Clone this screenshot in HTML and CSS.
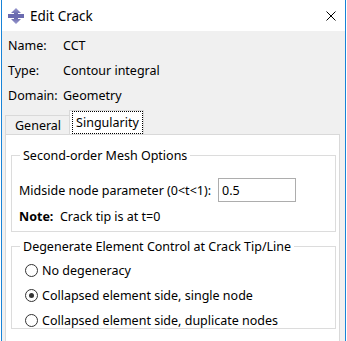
FILE: index.html
```html
<!DOCTYPE html>
<html>
  <head>
    <title>Edit Crack</title>
    <meta charset="utf-8" />
    <link rel="stylesheet" href="styles.css">
  </head>
  <body>
    <div class="window">
      <div class="titlebar">
        <svg class="app-icon" width="16" height="16" viewBox="0 0 16 16">
          <defs>
            <linearGradient id="iconFill" x1="0" y1="0" x2="0" y2="1">
              <stop offset="0" stop-color="#9a9ad0" />
              <stop offset="0.5" stop-color="#5a5aa0" />
              <stop offset="1" stop-color="#9a9ad0" />
            </linearGradient>
          </defs>
          <polygon points="8,0 13,5 10,5 10,11 13,11 8,16 3,11 6,11 6,5 3,5" fill="url(#iconFill)" />
          <rect x="0" y="6" width="16" height="4" fill="#6b6bb0" />
        </svg>
        <span class="title">Edit Crack</span>
        <svg class="close" width="10" height="10" viewBox="0 0 10 10">
          <path d="M0.5 0.5 L9.5 9.5 M9.5 0.5 L0.5 9.5" stroke="#000" stroke-width="1" />
        </svg>
      </div>
      <div class="content">
        <div class="info">
          <div class="info-row"><span class="info-label">Name:</span><span>CCT</span></div>
          <div class="info-row"><span class="info-label">Type:</span><span>Contour integral</span></div>
          <div class="info-row"><span class="info-label">Domain:</span><span>Geometry</span></div>
        </div>
        <div class="tabs">
          <div class="tab">General</div>
          <div class="tab tab-active"><span class="tab-focus">Singularity</span></div>
        </div>
        <div class="panel">
          <fieldset class="group group-mesh">
            <legend>Second-order Mesh Options</legend>
            <div class="param-row">
              <label for="midside">Midside node parameter (0&lt;t&lt;1):</label>
              <input id="midside" class="text-input" type="text" value="0.5" />
            </div>
            <div class="note"><b>Note:</b>&nbsp; Crack tip is at t=0</div>
          </fieldset>
          <fieldset class="group group-degen">
            <legend>Degenerate Element Control at Crack Tip/Line</legend>
            <div class="radio-row"><span class="radio"></span>No degeneracy</div>
            <div class="radio-row"><span class="radio checked"></span>Collapsed element side, single node</div>
            <div class="radio-row"><span class="radio"></span>Collapsed element side, duplicate nodes</div>
          </fieldset>
        </div>
      </div>
    </div>
  </body>
</html>
```
FILE: styles.css
```css
body {
  margin: 0;
  padding: 0;
  background: #fff;
  font-family: "Noto Sans", "Open Sans", sans-serif;
  font-size: 12.5px;
  color: #000;
  overflow: hidden;
}

.window {
  margin-left: 1px;
  width: 345px;
  height: 341px;
  box-sizing: border-box;
  border-left: 1px solid #1883d7;
  border-right: 1px solid #1883d7;
  background: #f0f0f0;
  overflow: hidden;
}

/* Title bar */

.titlebar {
  height: 31px;
  background: #fff;
  display: flex;
  align-items: center;
  padding: 0 8px 0 6px;
}

.app-icon {
  margin-right: 6px;
}

.title {
  flex: 1;
  font-size: 13.5px;
}

.close {
  margin-right: 1px;
}

/* Info rows */

.content {
  padding-top: 2px;
}

.info {
  padding-left: 6px;
}

.info-row {
  height: 25px;
  display: flex;
  align-items: center;
}

.info-label {
  width: 55px;
}

/* Tabs */

.tabs {
  display: flex;
  align-items: flex-end;
  margin: 2px 0 0 3px;
  height: 24px;
}

.tab {
  height: 19px;
  box-sizing: border-box;
  padding: 0 8px 0 9px;
  border: 1px solid #d9d9d9;
  border-bottom: none;
  display: flex;
  align-items: center;
  background: #f0f0f0;
}

.tab-active {
  height: 24px;
  margin-left: -1px;
  padding: 0 1px 0 3px;
  background: #fff;
  align-items: flex-start;
  padding-top: 1px;
}

.tab-focus {
  outline: 1px dotted #000;
  padding: 0 3px;
  height: 21px;
  display: flex;
  align-items: center;
}

/* Panel */

.panel {
  margin-left: 3px;
  width: 335px;
  height: 240px;
  box-sizing: border-box;
  border: 1px solid #d9d9d9;
  background: #fff;
  padding-top: 12px;
}

.group {
  margin: 0 0 0 5px;
  width: 325px;
  box-sizing: border-box;
  border: 1px solid #dcdcdc;
  padding: 0 7px;
}

.group legend {
  padding: 0 3px;
  margin-left: 1px;
}

.group-mesh {
  height: 85px;
}

.param-row {
  display: flex;
  align-items: center;
  margin-top: 14px;
}

.text-input {
  width: 78px;
  height: 24px;
  box-sizing: border-box;
  margin-left: 7px;
  border: 1px solid #adadad;
  padding: 0 3px;
  font-family: inherit;
  font-size: 12.5px;
  color: #000;
}

.note {
  margin-top: 5px;
  height: 20px;
  line-height: 20px;
}

.note b {
  font-weight: bold;
}

.group-degen {
  margin-top: 6px;
  height: 91px;
}

.radio-row {
  height: 25px;
  display: flex;
  align-items: center;
  padding-left: 6px;
}

.radio-row:first-of-type {
  margin-top: 3px;
}

.radio {
  width: 13px;
  height: 13px;
  box-sizing: border-box;
  border: 1px solid #333;
  border-radius: 50%;
  margin-right: 4px;
  background: #fff;
  position: relative;
}

.radio.checked::after {
  content: "";
  position: absolute;
  left: 3px;
  top: 3px;
  width: 5px;
  height: 5px;
  border-radius: 50%;
  background: #333;
}
```
